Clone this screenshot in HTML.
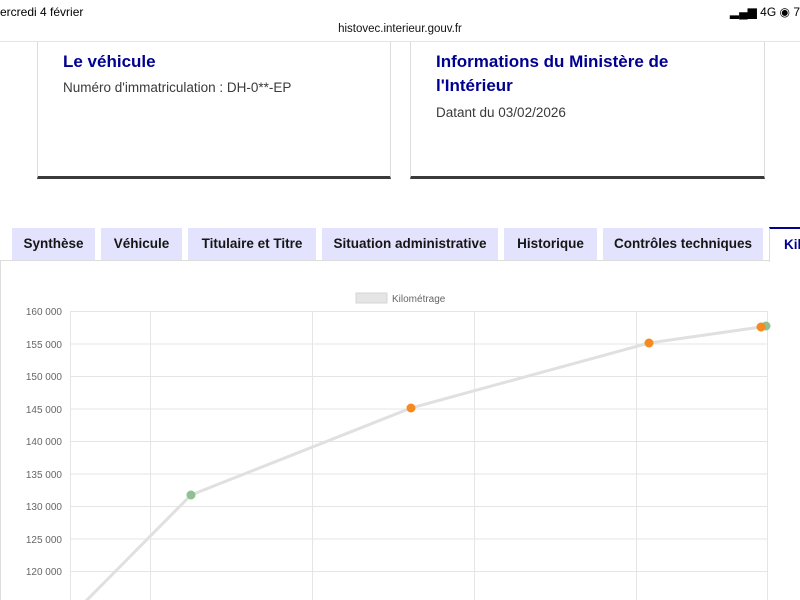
<html><head><style>
body{margin:0;width:800px;height:600px;overflow:hidden;background:#fff;font-family:"Liberation Sans",sans-serif;position:relative}
.a{position:absolute}
.card{position:absolute;top:42px;height:134px;border:1px solid #ddd;border-top:none;border-bottom:3px solid #3a3a3a;background:#fff}
.card h2{margin:0;font-size:17px;color:#000091;font-weight:bold;line-height:24px}
.card p{margin:0;font-size:13.5px;color:#3a3a3a}
.tab{position:absolute;top:228px;height:32px;background:#e3e3fd;color:#161616;font-weight:bold;font-size:13.5px;line-height:32px;text-align:center}
</style></head><body>
<div class="a" style="left:0;top:5px;font-size:12px;color:#000">ercredi 4 février</div>
<div class="a" style="right:0;top:5px;font-size:12px;color:#000">▂▄▆ 4G ◉ 7</div>
<div class="a" style="left:0;width:800px;top:23px;text-align:center;font-size:11.5px;color:#111">histovec.interieur.gouv.fr</div>
<div class="a" style="left:0;top:41px;width:800px;height:1px;background:#e5e5e5"></div>
<div class="card" style="left:37px;width:352px"><h2 style="margin:8px 0 0 25px">Le véhicule</h2><p style="margin:6px 0 0 25px">Numéro d'immatriculation : DH-0**-EP</p></div>
<div class="card" style="left:410px;width:353px"><h2 style="margin:8px 0 0 25px">Informations du Ministère de<br>l'Intérieur</h2><p style="margin:7px 0 0 25px">Datant du 03/02/2026</p></div>
<div class="tab" style="left:12px;width:83px">Synthèse</div>
<div class="tab" style="left:101px;width:81px">Véhicule</div>
<div class="tab" style="left:188px;width:128px">Titulaire et Titre</div>
<div class="tab" style="left:322px;width:176px">Situation administrative</div>
<div class="tab" style="left:504px;width:93px">Historique</div>
<div class="tab" style="left:603px;width:160px">Contrôles techniques</div>
<div class="a" style="left:769px;top:227px;width:40px;height:33px;border-top:2px solid #000091;border-left:1px solid #ddd;background:#fff;color:#000091;font-weight:bold;font-size:13.5px;line-height:32px;padding-left:14px">Kilo</div>
<div class="a" style="left:0;top:260px;width:769px;height:1px;background:#ddd"></div>
<div class="a" style="left:0;top:260px;width:1px;height:340px;background:#ddd"></div>
<svg class="a" style="left:0;top:0" width="800" height="600" font-family="Liberation Sans" font-size="10" fill="#666">
<rect x="356" y="293" width="31" height="10" fill="#e5e5e5" stroke="#d5d5d5"/>
<text x="392" y="302" font-size="10">Kilométrage</text>
<g stroke="#e5e5e5" stroke-width="1">
<line x1="70" y1="311.5" x2="768" y2="311.5"/><line x1="70" y1="344" x2="768" y2="344"/><line x1="70" y1="376.5" x2="768" y2="376.5"/><line x1="70" y1="409" x2="768" y2="409"/><line x1="70" y1="441.5" x2="768" y2="441.5"/><line x1="70" y1="474" x2="768" y2="474"/><line x1="70" y1="506.5" x2="768" y2="506.5"/><line x1="70" y1="539" x2="768" y2="539"/><line x1="70" y1="571.5" x2="768" y2="571.5"/>
<line x1="70.5" y1="311" x2="70.5" y2="600"/><line x1="150.5" y1="311" x2="150.5" y2="600"/><line x1="312.5" y1="311" x2="312.5" y2="600"/><line x1="474.5" y1="311" x2="474.5" y2="600"/><line x1="636.5" y1="311" x2="636.5" y2="600"/><line x1="767.5" y1="311" x2="767.5" y2="600"/>
</g>
<g text-anchor="end"><text x="62" y="315">160 000</text><text x="62" y="348">155 000</text><text x="62" y="380">150 000</text><text x="62" y="413">145 000</text><text x="62" y="445">140 000</text><text x="62" y="478">135 000</text><text x="62" y="510">130 000</text><text x="62" y="543">125 000</text><text x="62" y="575">120 000</text></g>
<polyline points="85,602 191,495 411,408 649,343 761,327 766,326" fill="none" stroke="#e0e0e0" stroke-width="3"/>
<circle cx="191" cy="495" r="4.5" fill="#8fc08f"/><circle cx="411" cy="408" r="4.5" fill="#f68a1e"/><circle cx="649" cy="343" r="4.5" fill="#f68a1e"/><circle cx="766" cy="326" r="4.5" fill="#8fc08f"/><circle cx="761" cy="327" r="4.5" fill="#f68a1e"/>
</svg>
</body></html>
